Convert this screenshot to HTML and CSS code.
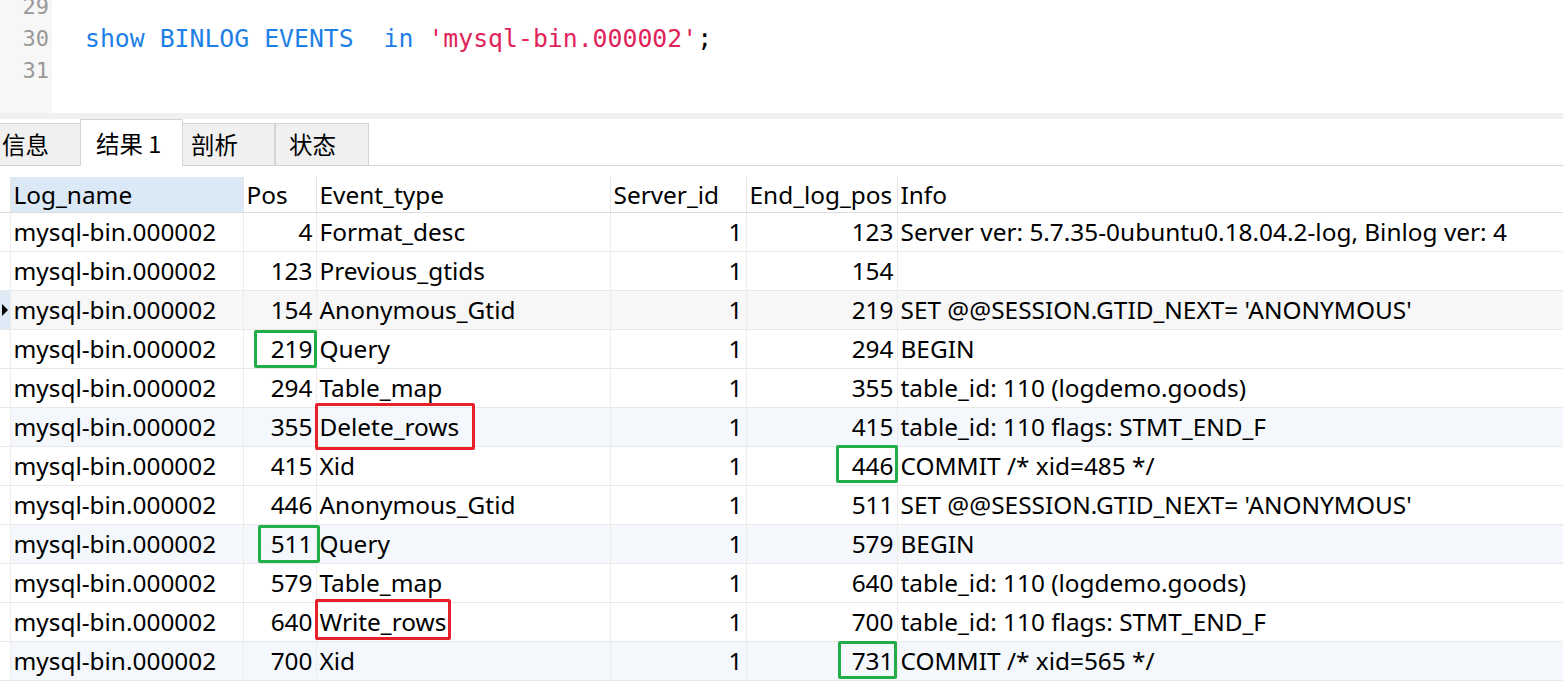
FILE: index.html
```html
<!DOCTYPE html>
<html lang="zh-CN">
<head>
<meta charset="utf-8">
<title>show BINLOG EVENTS</title>
<link rel="stylesheet" href="styles.css">
</head>
<body>
<div class="editor">
  <div class="gutter">
    <div class="ln">29</div>
    <div class="ln">30</div>
    <div class="ln">31</div>
  </div>
  <div class="code">
    <div class="line"></div>
    <div class="line"><span class="kw">show BINLOG EVENTS  in</span> <span class="str">'mysql-bin.000002'</span>;</div>
    <div class="line"></div>
  </div>
</div>
<div class="splitter"></div>
<div class="tabs">
  <div class="tab tab-info">信息</div>
  <div class="tab tab-active">结果 1</div>
  <div class="tab tab-profile">剖析</div>
  <div class="tab tab-status">状态</div>
</div>
<div class="grid-wrap">
<table class="grid">
  <colgroup>
    <col class="c-ind"><col class="c-log"><col class="c-pos"><col class="c-evt"><col class="c-sid"><col class="c-end"><col class="c-info">
  </colgroup>
  <thead>
    <tr>
      <th class="ind"></th>
      <th class="sorted">Log_name</th>
      <th>Pos</th>
      <th>Event_type</th>
      <th>Server_id</th>
      <th>End_log_pos</th>
      <th>Info</th>
    </tr>
  </thead>
  <tbody>
    <tr><td class="ind"></td><td>mysql-bin.000002</td><td class="num">4</td><td>Format_desc</td><td class="num">1</td><td class="num">123</td><td>Server ver: 5.7.35-0ubuntu0.18.04.2-log, Binlog ver: 4</td></tr>
    <tr><td class="ind"></td><td>mysql-bin.000002</td><td class="num">123</td><td>Previous_gtids</td><td class="num">1</td><td class="num">154</td><td></td></tr>
    <tr class="current"><td class="ind"><span class="arrow"></span></td><td>mysql-bin.000002</td><td class="num">154</td><td>Anonymous_Gtid</td><td class="num">1</td><td class="num">219</td><td>SET @@SESSION.GTID_NEXT= 'ANONYMOUS'</td></tr>
    <tr><td class="ind"></td><td>mysql-bin.000002</td><td class="num mark"><span class="box green box-pos219"></span>219</td><td>Query</td><td class="num">1</td><td class="num">294</td><td>BEGIN</td></tr>
    <tr><td class="ind"></td><td>mysql-bin.000002</td><td class="num">294</td><td>Table_map</td><td class="num">1</td><td class="num">355</td><td>table_id: 110 (logdemo.goods)</td></tr>
    <tr class="alt"><td class="ind"></td><td>mysql-bin.000002</td><td class="num">355</td><td class="mark"><span class="box red box-del"></span>Delete_rows</td><td class="num">1</td><td class="num">415</td><td>table_id: 110 flags: STMT_END_F</td></tr>
    <tr><td class="ind"></td><td>mysql-bin.000002</td><td class="num">415</td><td>Xid</td><td class="num">1</td><td class="num mark"><span class="box green box-end446"></span>446</td><td>COMMIT /* xid=485 */</td></tr>
    <tr><td class="ind"></td><td>mysql-bin.000002</td><td class="num">446</td><td>Anonymous_Gtid</td><td class="num">1</td><td class="num">511</td><td>SET @@SESSION.GTID_NEXT= 'ANONYMOUS'</td></tr>
    <tr class="alt"><td class="ind"></td><td>mysql-bin.000002</td><td class="num mark"><span class="box green box-pos511"></span>511</td><td>Query</td><td class="num">1</td><td class="num">579</td><td>BEGIN</td></tr>
    <tr><td class="ind"></td><td>mysql-bin.000002</td><td class="num">579</td><td>Table_map</td><td class="num">1</td><td class="num">640</td><td>table_id: 110 (logdemo.goods)</td></tr>
    <tr><td class="ind"></td><td>mysql-bin.000002</td><td class="num">640</td><td class="mark"><span class="box red box-write"></span>Write_rows</td><td class="num">1</td><td class="num">700</td><td>table_id: 110 flags: STMT_END_F</td></tr>
    <tr class="alt"><td class="ind"></td><td>mysql-bin.000002</td><td class="num">700</td><td>Xid</td><td class="num">1</td><td class="num mark"><span class="box green box-end731"></span>731</td><td>COMMIT /* xid=565 */</td></tr>
  </tbody>
</table>
</div>
</body>
</html>
```

FILE: styles.css
```css
html, body {
  margin: 0;
  padding: 0;
  background: #ffffff;
  overflow: hidden;
}
body {
  width: 1563px;
  height: 686px;
  font-family: "Noto Sans", "Noto Sans CJK SC", sans-serif;
  color: #000;
}

/* ---------- editor ---------- */
.editor {
  display: flex;
  height: 113px;
  overflow: hidden;
}
.gutter {
  width: 52px;
  background: #f7f7f7;
  margin-top: -9px;
}
.ln {
  height: 32px;
  line-height: 32px;
  text-align: right;
  padding-right: 3px;
  font-family: "DejaVu Sans Mono", monospace;
  font-size: 22px;
  color: #999999;
}
.code {
  margin-top: -9px;
  padding-left: 33px;
  font-family: "DejaVu Sans Mono", monospace;
  font-size: 24.8px;
}
.line {
  height: 32px;
  line-height: 32px;
  white-space: pre;
}
.kw { color: #1e7fe6; }
.str { color: #e0245a; }

.splitter {
  height: 6px;
  background: #f0f0f0;
}

/* ---------- tabs ---------- */
.tabs {
  display: flex;
  align-items: flex-end;
  height: 46px;
  border-bottom: 1px solid #d4d4d4;
  font-family: "Noto Sans CJK SC", sans-serif;
  font-size: 23.5px;
}
.tab {
  box-sizing: border-box;
  height: 42px;
  line-height: 40px;
  background: #f0f0f0;
  border: 1px solid #d4d4d4;
  border-bottom: none;
  white-space: nowrap;
}
.tab-info {
  margin-left: -16px;
  width: 96px;
  padding-left: 17px;
  border-right: none;
}
.tab-active {
  background: #ffffff;
  height: 47px;
  line-height: 46px;
  width: 103px;
  padding-left: 15px;
  margin-bottom: -1px;
}
.tab-profile {
  width: 92px;
  padding-left: 8px;
  border-left: none;
}
.tab-status {
  width: 94px;
  padding-left: 13px;
  border-left: 1px solid #d4d4d4;
}

/* ---------- grid ---------- */
.grid-wrap {
  padding-top: 11px;
}
.grid {
  border-collapse: collapse;
  table-layout: fixed;
  width: 1563px;
  font-size: 24.4px;
}
.c-ind { width: 10px; }
.c-log { width: 233px; }
.c-pos { width: 73px; }
.c-evt { width: 294px; }
.c-sid { width: 136px; }
.c-end { width: 151px; }
.c-info { width: auto; }

.grid th {
  height: 35px;
  padding: 0 3px;
  font-weight: normal;
  text-align: left;
  border-left: 1px solid #e4e4e4;
  border-bottom: 1px solid #dcdcdc;
  white-space: nowrap;
  overflow: hidden;
}
.grid th.ind { border-left: none; padding: 0; }
.grid th.sorted { background: #dbe9f7; }

.grid td {
  height: 36px;
  padding: 0 3px 2px;
  border-left: 1px solid #ececec;
  border-bottom: 1px solid #e8e8e8;
  white-space: nowrap;
  overflow: visible;
}
.grid td.ind {
  border-left: none;
  padding: 0;
  background: #ffffff;
}
.grid td.num { text-align: right; }
.grid tr.alt td { background: #f4f8fc; }
.grid tr.alt td.ind { background: #ffffff; }
.grid tr.current td { background: #f7f7f7; }
.grid tr.current td.ind { background: #dde9f5; }

.arrow {
  display: block;
  width: 0;
  height: 0;
  border-top: 6px solid transparent;
  border-bottom: 6px solid transparent;
  border-left: 6px solid #000;
  margin-left: 2px;
}

.mark { position: relative; }
.box {
  position: absolute;
  box-sizing: border-box;
  border: 3px solid;
  border-radius: 2px;
  pointer-events: none;
}
.box.green { border-color: #21ad47; }
.box.red { border-color: #e8202a; }

.box-pos219 { left: 10px; right: -1px; top: 0px; bottom: 0px; }
.box-pos511 { left: 14px; right: -4px; top: 0px; bottom: 0px; }
.box-end446 { left: 89px; right: -1px; top: -2px; bottom: 2px; }
.box-end731 { left: 91px; right: 0px; top: -1px; bottom: 1px; }
.box-del { left: -2px; width: 160px; top: -5px; bottom: -4px; }
.box-write { left: -2px; width: 136px; top: -4px; bottom: 1px; }
```
